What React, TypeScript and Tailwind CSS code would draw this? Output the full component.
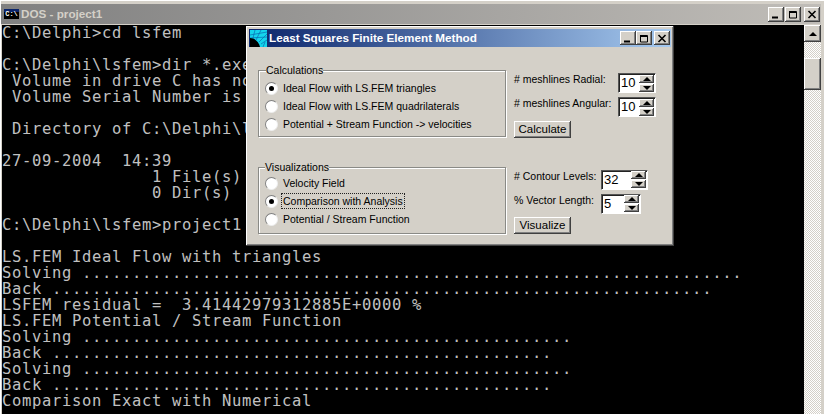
import React from 'react'

const consoleLines = [
  'C:\\Delphi>cd lsfem',
  '',
  'C:\\Delphi\\lsfem>dir *.exe',
  ' Volume in drive C has no label.',
  ' Volume Serial Number is 07D0-0B16',
  '',
  ' Directory of C:\\Delphi\\lsfem',
  '',
  '27-09-2004  14:39',
  '               1 File(s)',
  '               0 Dir(s)',
  '',
  'C:\\Delphi\\lsfem>project1',
  '',
  'LS.FEM Ideal Flow with triangles',
  'Solving ' + '.'.repeat(66),
  'Back ' + '.'.repeat(66),
  'LSFEM residual =  3.41442979312885E+0000 %',
  'LS.FEM Potential / Stream Function',
  'Solving ' + '.'.repeat(49),
  'Back ' + '.'.repeat(50),
  'Solving ' + '.'.repeat(49),
  'Back ' + '.'.repeat(50),
  'Comparison Exact with Numerical',
]

const raised =
  'bg-[#d4d0c8] shadow-[inset_-1px_-1px_0_#404040,inset_1px_1px_0_#ffffff,inset_-2px_-2px_0_#808080]'

function CaptionButton({ kind, size = 'small' }: { kind: 'min' | 'max' | 'close'; size?: 'small' | 'large' }) {
  return (
    <span className={`${raised} flex items-center justify-center ${size === 'large' ? 'h-[15px] w-[16px]' : 'h-[14px] w-[16px]'}`}>
      <svg width="10" height="9" viewBox="0 0 10 9" fill="none" stroke="#000">
        {kind === 'min' && <path d="M1 7.5h6" strokeWidth="2" />}
        {kind === 'max' && <path d="M1.5 1.5h7v6.5h-7zM1.5 1v1.5h7" strokeWidth="1" />}
        {kind === 'close' && <path d="M1.5 1l7 7M8.5 1l-7 7" strokeWidth="1.6" />}
      </svg>
    </span>
  )
}

function Radio({ label, checked, focused }: { label: string; checked?: boolean; focused?: boolean }) {
  return (
    <div className="flex h-[18px] items-center">
      <span className="flex h-[13px] w-[13px] shrink-0 items-center justify-center rounded-full border border-t-[#808080] border-l-[#808080] border-r-[#eeeeee] border-b-[#eeeeee] bg-white">
        {checked && <span className="h-[5px] w-[5px] rounded-full bg-black" />}
      </span>
      <span className={`ml-[4px] px-px leading-[14px] ${focused ? 'outline-1 outline-dotted outline-[#222]' : ''}`}>{label}</span>
    </div>
  )
}

function Group({ title, legendClass, children }: { title: string; legendClass: string; children: React.ReactNode }) {
  return (
    <div className={`relative h-[67px] w-[248px] border border-[#8a8a86] pl-[6px] shadow-[1px_1px_0_#ffffff,inset_1px_1px_0_#ffffff]`}>
      <span className={`absolute top-[-7px] bg-[#d4d0c8] leading-[13px] ${legendClass}`}>{title}</span>
      {children}
    </div>
  )
}

function Spin({ value, widthClass }: { value: string; widthClass: string }) {
  return (
    <div className={`flex h-[20px] items-center justify-between border border-t-[#555] border-l-[#555] border-r-white border-b-white bg-white pl-[2px] pr-px text-[13px] shadow-[inset_1px_1px_0_#222] ${widthClass}`}>
      <span>{value}</span>
      <span className="flex flex-col gap-px">
        <span className={`${raised} flex h-[8px] w-[15px] items-center justify-center`}>
          <span className="h-0 w-0 border-x-[4px] border-b-[4px] border-x-transparent border-b-black" />
        </span>
        <span className={`${raised} flex h-[8px] w-[15px] items-center justify-center`}>
          <span className="h-0 w-0 border-x-[4px] border-t-[4px] border-x-transparent border-t-black" />
        </span>
      </span>
    </div>
  )
}

function PushButton({ label }: { label: string }) {
  return (
    <button className={`${raised} flex h-[17px] w-[57px] items-center justify-center text-[11.5px] leading-none text-black`}>
      {label}
    </button>
  )
}

function MeshIcon() {
  return (
    <svg width="17" height="17" viewBox="0 0 17 17" className="shrink-0">
      <rect width="17" height="17" fill="#14d4ec" />
      <path d="M0 5L17 2M0 8L17 7M3 8L5 0M6 10L11 0M9 12L17 4M11 14L17 10M13 17L15 12" stroke="#0a6ab0" strokeWidth="0.7" />
      <path d="M0 8C5 8 9 12 10 17H0z" fill="#000" />
    </svg>
  )
}

export default function App() {
  return (
    <div className="relative h-[414px] w-[824px] overflow-hidden bg-[#d4d0c8] font-['Liberation_Sans',sans-serif] text-[10.5px] text-black">
      {/* DOS window */}
      <div className="flex h-full flex-col border-t-[1px] border-l-[1px] border-t-white border-l-white pr-[3px] pt-[3px]">
        <div className="flex h-[20px] shrink-0 items-center bg-[linear-gradient(90deg,#808080,#c0bdb8)] pl-[3px] pr-[1px]">
          <span className="flex h-[10px] w-[15px] items-center justify-center bg-[linear-gradient(180deg,#0a246a_0_25%,#000000_25%)] font-['Liberation_Mono',monospace] text-[7px] font-bold leading-none text-white">
            C:\
          </span>
          <span className="ml-[2px] text-[11.7px] font-bold text-[#d4d0c8]">DOS - project1</span>
          <span className="ml-auto flex items-center">
            <CaptionButton kind="min" size="large" />
            <span className="ml-[1px]"><CaptionButton kind="max" size="large" /></span>
            <span className="ml-[3px]"><CaptionButton kind="close" size="large" /></span>
          </span>
        </div>
        <div className="mt-px flex min-h-0 flex-1 pl-px">
          <pre className="min-w-0 flex-1 overflow-hidden bg-black font-['DejaVu_Sans_Mono',monospace] text-[15.5px] leading-[16px] tracking-[0.67px] text-[#c0c0c0]">
            {consoleLines.join('\n')}
          </pre>
          <div className="flex w-[17px] shrink-0 flex-col bg-[repeating-conic-gradient(#d4d0c8_0_25%,#ffffff_0_50%)] bg-[length:2px_2px]">
            <span className={`${raised} flex h-[17px] shrink-0 items-center justify-center`}>
              <span className="h-0 w-0 border-x-[4px] border-b-[4px] border-x-transparent border-b-black" />
            </span>
            <span className={`${raised} mt-[16px] h-[32px] shrink-0`} />
          </div>
        </div>
      </div>

      {/* LSFEM dialog, floating over the console */}
      <div className={`${raised} absolute left-[246px] top-[26px] h-[220px] w-[428px] p-[3px]`}>
        <div className="flex h-[18px] items-center bg-[linear-gradient(90deg,#0a246a,#a6caf0)] pl-[1px] pr-[2px]">
          <MeshIcon />
          <span className="ml-[2px] text-[11.7px] font-bold text-white">Least Squares Finite Element Method</span>
          <span className="ml-auto flex">
            <CaptionButton kind="min" />
            <CaptionButton kind="max" />
            <span className="ml-[2px] mr-[-1px]"><CaptionButton kind="close" /></span>
          </span>
        </div>

        <div className="ml-[9px] mt-[23px] flex flex-col gap-[29px]">
          <div className="flex">
            <Group title="Calculations" legendClass="left-[7px]">
              <div className="pt-[8px]">
                <Radio label="Ideal Flow with LS.FEM triangles" checked />
                <Radio label="Ideal Flow with LS.FEM quadrilaterals" />
                <Radio label="Potential + Stream Function -> velocities" />
              </div>
            </Group>
            <div className="ml-[8px] mt-[3px] flex flex-col">
              <div className="flex h-[20px] items-center">
                <span className="w-[104px] pb-[6px]">{'# meshlines Radial:'}</span>
                <Spin value="10" widthClass="w-[38px]" />
              </div>
              <div className="mt-[4px] flex h-[20px] items-center">
                <span className="w-[104px] pb-[6px]">{'# meshlines Angular:'}</span>
                <Spin value="10" widthClass="w-[38px]" />
              </div>
              <div className="mt-[4px]"><PushButton label="Calculate" /></div>
            </div>
          </div>

          <div className="flex">
            <Group title="Visualizations" legendClass="left-[6px]">
              <div className="pt-[6px]">
                <Radio label="Velocity Field" />
                <Radio label="Comparison with Analysis" checked focused />
                <Radio label="Potential / Stream Function" />
              </div>
            </Group>
            <div className="ml-[8px] mt-[2px] flex flex-col">
              <div className="flex h-[21px] items-center">
                <span className="w-[87px] pb-[6px]">{'# Contour Levels:'}</span>
                <Spin value="32" widthClass="w-[47px]" />
              </div>
              <div className="mt-[3px] flex h-[21px] items-center">
                <span className="w-[87px] pb-[6px]">{'% Vector Length:'}</span>
                <Spin value="5" widthClass="w-[40px]" />
              </div>
              <div className="mt-[3px]"><PushButton label="Visualize" /></div>
            </div>
          </div>
        </div>
      </div>
    </div>
  )
}
